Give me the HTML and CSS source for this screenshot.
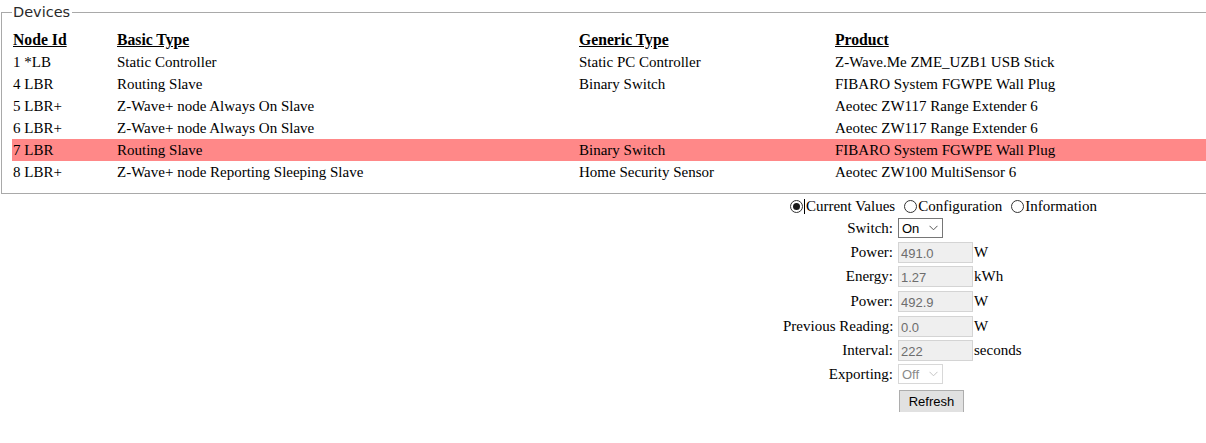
FILE: index.html
```html
<!DOCTYPE html>
<html>
<head>
<meta charset="utf-8">
<title>Devices</title>
<link rel="stylesheet" href="styles.css">
</head>
<body>
<fieldset class="devices">
  <legend class="devices-legend">Devices</legend>
  <table class="dev-table">
    <colgroup>
      <col class="c-node">
      <col class="c-basic">
      <col class="c-generic">
      <col>
    </colgroup>
    <thead>
      <tr><th>Node Id</th><th>Basic Type</th><th>Generic Type</th><th>Product</th></tr>
    </thead>
    <tbody>
      <tr><td>1 *LB</td><td>Static Controller</td><td>Static PC Controller</td><td>Z-Wave.Me ZME_UZB1 USB Stick</td></tr>
      <tr><td>4 LBR</td><td>Routing Slave</td><td>Binary Switch</td><td>FIBARO System FGWPE Wall Plug</td></tr>
      <tr><td>5 LBR+</td><td>Z-Wave+ node Always On Slave</td><td></td><td>Aeotec ZW117 Range Extender 6</td></tr>
      <tr><td>6 LBR+</td><td>Z-Wave+ node Always On Slave</td><td></td><td>Aeotec ZW117 Range Extender 6</td></tr>
      <tr class="selected"><td>7 LBR</td><td>Routing Slave</td><td>Binary Switch</td><td>FIBARO System FGWPE Wall Plug</td></tr>
      <tr><td>8 LBR+</td><td>Z-Wave+ node Reporting Sleeping Slave</td><td>Home Security Sensor</td><td>Aeotec ZW100 MultiSensor 6</td></tr>
    </tbody>
  </table>
</fieldset>

<div class="panel">
  <div class="tabs">
    <label class="tab"><span class="radio checked"></span><span class="caret"></span>Current Values</label>
    <label class="tab"><span class="radio"></span>Configuration</label>
    <label class="tab"><span class="radio"></span>Information</label>
  </div>
  <div class="values">
    <span class="lbl">Switch:</span>
    <span class="ctl"><span class="select"><span class="sel-text">On</span><svg class="chev" width="9" height="6" viewBox="0 0 9 6"><path d="M0.5 0.8 L4.5 4.8 L8.5 0.8" fill="none" stroke="#555" stroke-width="1"/></svg></span></span>
    <span class="unit"></span>

    <span class="lbl">Power:</span>
    <span class="ctl"><span class="field">491.0</span></span>
    <span class="unit">W</span>

    <span class="lbl">Energy:</span>
    <span class="ctl"><span class="field">1.27</span></span>
    <span class="unit">kWh</span>

    <span class="lbl">Power:</span>
    <span class="ctl"><span class="field">492.9</span></span>
    <span class="unit">W</span>

    <span class="lbl">Previous Reading:</span>
    <span class="ctl"><span class="field">0.0</span></span>
    <span class="unit">W</span>

    <span class="lbl">Interval:</span>
    <span class="ctl"><span class="field">222</span></span>
    <span class="unit">seconds</span>

    <span class="lbl">Exporting:</span>
    <span class="ctl"><span class="select disabled"><span class="sel-text">Off</span><svg class="chev" width="9" height="6" viewBox="0 0 9 6"><path d="M0.5 0.8 L4.5 4.8 L8.5 0.8" fill="none" stroke="#c4c4c4" stroke-width="1"/></svg></span></span>
    <span class="unit"></span>

    <span class="lbl"></span>
    <span class="ctl"><button class="btn" type="button">Refresh</button></span>
    <span class="unit"></span>
  </div>
</div>
</body>
</html>
```

FILE: styles.css
```css
html, body {
  margin: 0;
  padding: 0;
  background: #ffffff;
  overflow: hidden;
}

body {
  font-family: "Liberation Serif", "Times New Roman", serif;
  font-size: 15px;
  color: #000;
}

.devices {
  margin: 3px 0 0 1px;
  padding: 8px 0 10px 10px;
  border: 1px solid #a9a9a9;
  border-right: none;
  min-width: 0;
}

.devices-legend {
  font-family: "DejaVu Sans", "Noto Sans", sans-serif;
  font-size: 14.5px;
  line-height: 18px;
  color: #2a2a2a;
  padding: 0 2px 0 1px;
  margin-left: 0;
}

.dev-table {
  width: 100%;
  border-collapse: collapse;
  table-layout: fixed;
}

.c-node { width: 104px; }
.c-basic { width: 462px; }
.c-generic { width: 256px; }

.dev-table th,
.dev-table td {
  height: 22px;
  padding: 0 0 0 1px;
  text-align: left;
  vertical-align: middle;
  white-space: nowrap;
  line-height: 22px;
}

.dev-table th {
  font-weight: bold;
  font-size: 15.7px;
  text-decoration: underline;
}

.dev-table tr.selected td {
  background: #ff8888;
}

.panel {
  margin-left: 783px;
  width: 314px;
  padding-top: 3px;
}

.tabs {
  display: flex;
  justify-content: flex-end;
  align-items: center;
  height: 18px;
  gap: 9px;
}

.tab {
  display: flex;
  align-items: center;
  white-space: nowrap;
}

.radio {
  width: 11px;
  height: 11px;
  border: 1px solid #333;
  border-radius: 50%;
  box-sizing: content-box;
  margin-right: 1px;
  display: inline-flex;
  align-items: center;
  justify-content: center;
}

.radio.checked::after {
  content: "";
  width: 7px;
  height: 7px;
  background: #1a1a1a;
  border-radius: 50%;
}

.caret {
  width: 1px;
  height: 15px;
  background: #000;
  margin-right: 1px;
}

.values {
  display: grid;
  grid-template-columns: 115px 75px 1fr;
  grid-template-rows: 24px 24px 25px 25px 24px 24px 25px 23px;
  margin-top: 3px;
  align-items: start;
}

.lbl {
  text-align: right;
  white-space: nowrap;
  padding-right: 5px;
  line-height: 21px;
}

.ctl {
  display: flex;
  align-items: center;
}

.unit {
  white-space: nowrap;
  line-height: 21px;
  padding-left: 1px;
}

.field {
  box-sizing: border-box;
  width: 75px;
  height: 21px;
  border: 1px solid #d4d4d4;
  background: #efefef;
  color: #6d6d6d;
  font-family: "Liberation Sans", Arial, sans-serif;
  font-size: 13px;
  line-height: 19px;
  padding: 1px 2px 0;
}

.select {
  box-sizing: border-box;
  height: 20px;
  width: 45px;
  border: 1px solid #767676;
  display: flex;
  align-items: center;
  justify-content: space-between;
  padding: 0 4px 0 3px;
  font-family: "Liberation Sans", Arial, sans-serif;
  font-size: 13px;
  color: #000;
  background: #fff;
}

.select.disabled {
  border-color: #d8d8d8;
  color: #8a8a8a;
}

.sel-text {
  line-height: 18px;
  padding-top: 1px;
}

.chev {
  display: block;
}

.btn {
  box-sizing: border-box;
  width: 65px;
  height: 23px;
  margin: 1px 0 0 1px;
  padding: 0;
  border: 1px solid #adadad;
  background: #e1e1e1;
  font-family: "Liberation Sans", Arial, sans-serif;
  font-size: 13px;
  color: #000;
}
```
